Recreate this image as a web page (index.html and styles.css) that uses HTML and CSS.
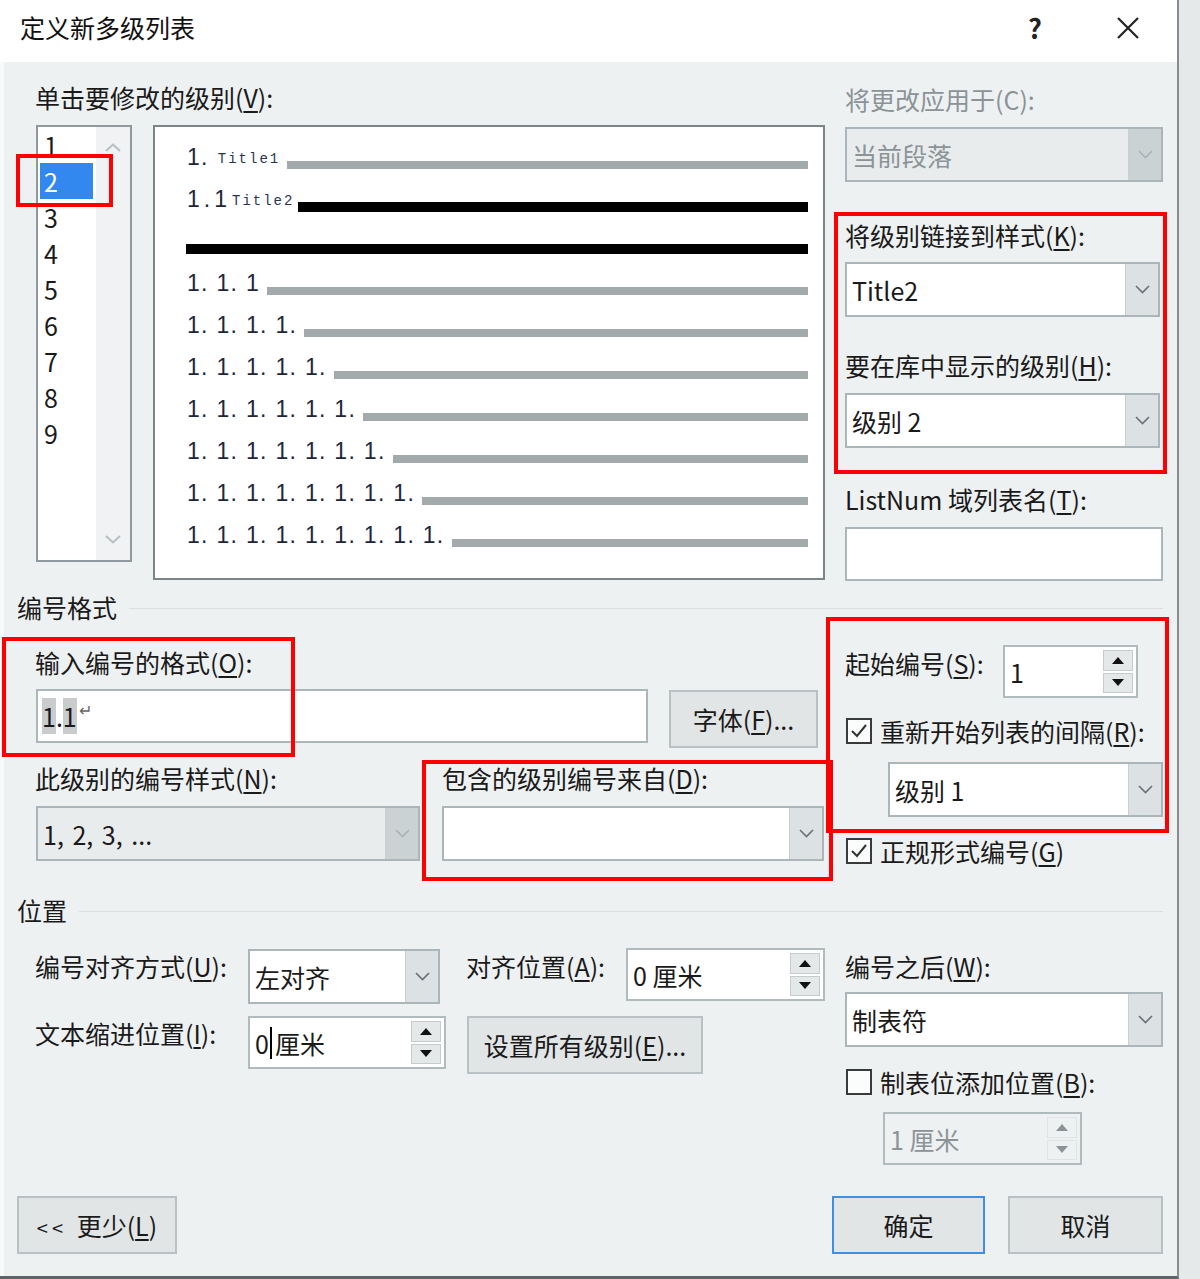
FILE: index.html
```html
<!DOCTYPE html>
<html lang="zh-CN">
<head>
    <meta charset="UTF-8">
    <meta name="viewport" content="width=device-width, initial-scale=1.0">
    <title>定义新多级列表</title>
    <link rel="stylesheet" href="styles.css">
</head>
<body>
<div class="dialog">
    <div class="titlebar">
        <span class="title">定义新多级列表</span>
        <span class="help">?</span>
        <svg class="close" width="24" height="24" viewBox="0 0 24 24"><path d="M2 2L22 22M22 2L2 22" stroke="#222" stroke-width="2.2" fill="none"/></svg>
    </div>

    <div class="content">
        <div class="top">
            <div class="levels-area">
                <div class="label">单击要修改的级别(<u>V</u>):</div>
                <div class="levels-row">
                    <div class="level-list">
                        <div class="level-items">
                            <div class="level">1</div>
                            <div class="level selected">2</div>
                            <div class="level">3</div>
                            <div class="level">4</div>
                            <div class="level">5</div>
                            <div class="level">6</div>
                            <div class="level">7</div>
                            <div class="level">8</div>
                            <div class="level">9</div>
                        </div>
                        <div class="level-scroll">
                            <svg width="16" height="9" viewBox="0 0 16 9"><polyline points="1,8 8,1.5 15,8" fill="none" stroke="#b7bfc2" stroke-width="2"/></svg>
                            <svg width="16" height="9" viewBox="0 0 16 9"><polyline points="1,1 8,7.5 15,1" fill="none" stroke="#b7bfc2" stroke-width="2"/></svg>
                        </div>
                    </div>
                    <div class="preview">
                        <div class="pv-row"><span class="pv-num">1.</span><span class="pv-title t1">Title1</span><span class="bar"></span></div>
                        <div class="pv-row"><span class="pv-num tight">1.1</span><span class="pv-title">Title2</span><span class="bar black"></span></div>
                        <div class="pv-row"><span class="bar black full"></span></div>
                        <div class="pv-row"><span class="pv-num">1. 1. 1</span><span class="bar"></span></div>
                        <div class="pv-row"><span class="pv-num">1. 1. 1. 1.</span><span class="bar"></span></div>
                        <div class="pv-row"><span class="pv-num">1. 1. 1. 1. 1.</span><span class="bar"></span></div>
                        <div class="pv-row"><span class="pv-num">1. 1. 1. 1. 1. 1.</span><span class="bar"></span></div>
                        <div class="pv-row"><span class="pv-num">1. 1. 1. 1. 1. 1. 1.</span><span class="bar"></span></div>
                        <div class="pv-row"><span class="pv-num">1. 1. 1. 1. 1. 1. 1. 1.</span><span class="bar"></span></div>
                        <div class="pv-row"><span class="pv-num">1. 1. 1. 1. 1. 1. 1. 1. 1.</span><span class="bar"></span></div>
                    </div>
                </div>
            </div>

            <div class="side">
                <div class="label muted">将更改应用于(C):</div>
                <div class="combo disabled apply-combo">
                    <span class="combo-text">当前段落</span>
                    <span class="combo-btn"><svg width="15" height="9" viewBox="0 0 15 9"><polyline points="1,1 7.5,7.5 14,1" fill="none" stroke="#aab2b5" stroke-width="1.6"/></svg></span>
                </div>
                <div class="label link-label">将级别链接到样式(<u>K</u>):</div>
                <div class="combo link-combo">
                    <span class="combo-text">Title2</span>
                    <span class="combo-btn"><svg width="15" height="9" viewBox="0 0 15 9"><polyline points="1,1 7.5,7.5 14,1" fill="none" stroke="#687175" stroke-width="1.6"/></svg></span>
                </div>
                <div class="label gallery-label">要在库中显示的级别(<u>H</u>):</div>
                <div class="combo gallery-combo">
                    <span class="combo-text">级别 2</span>
                    <span class="combo-btn"><svg width="15" height="9" viewBox="0 0 15 9"><polyline points="1,1 7.5,7.5 14,1" fill="none" stroke="#687175" stroke-width="1.6"/></svg></span>
                </div>
                <div class="label listnum-label">ListNum 域列表名(<u>T</u>):</div>
                <div class="text-input listnum-input"></div>
            </div>
        </div>

        <div class="group-title format-title"><span>编号格式</span><span class="group-line"></span></div>

        <div class="format">
            <div class="format-left">
                <div class="label enter-label">输入编号的格式(<u>O</u>):</div>
                <div class="format-row">
                    <div class="text-input format-input"><span class="hl">1</span>.<span class="hl">1</span><span class="para">↵</span></div>
                    <button class="btn font-btn">字体(<u>F</u>)...</button>
                </div>
                <div class="label-row">
                    <div class="label style-label">此级别的编号样式(<u>N</u>):</div>
                    <div class="label">包含的级别编号来自(<u>D</u>):</div>
                </div>
                <div class="combo-row">
                    <div class="combo disabled style-combo">
                        <span class="combo-text dark">1, 2, 3, ...</span>
                        <span class="combo-btn"><svg width="15" height="9" viewBox="0 0 15 9"><polyline points="1,1 7.5,7.5 14,1" fill="none" stroke="#aab2b5" stroke-width="1.6"/></svg></span>
                    </div>
                    <div class="combo include-combo">
                        <span class="combo-text"></span>
                        <span class="combo-btn"><svg width="15" height="9" viewBox="0 0 15 9"><polyline points="1,1 7.5,7.5 14,1" fill="none" stroke="#687175" stroke-width="1.6"/></svg></span>
                    </div>
                </div>
            </div>

            <div class="format-right">
                <div class="start-row">
                    <div class="label start-label">起始编号(<u>S</u>):</div>
                    <div class="spin start-spin">
                        <span class="spin-text">1</span>
                        <span class="spin-btns"><span class="spin-up"></span><span class="spin-down"></span></span>
                    </div>
                </div>
                <div class="check-row restart-check"><span class="checkbox"><svg width="20" height="20" viewBox="0 0 20 20"><polyline points="3,10 8,15 17,4" fill="none" stroke="#333" stroke-width="2"/></svg></span>重新开始列表的间隔(<u>R</u>):</div>
                <div class="combo restart-combo">
                    <span class="combo-text">级别 1</span>
                    <span class="combo-btn"><svg width="15" height="9" viewBox="0 0 15 9"><polyline points="1,1 7.5,7.5 14,1" fill="none" stroke="#687175" stroke-width="1.6"/></svg></span>
                </div>
                <div class="check-row legal-check"><span class="checkbox"><svg width="20" height="20" viewBox="0 0 20 20"><polyline points="3,10 8,15 17,4" fill="none" stroke="#333" stroke-width="2"/></svg></span>正规形式编号(<u>G</u>)</div>
            </div>
        </div>

        <div class="group-title position-title"><span>位置</span><span class="group-line"></span></div>

        <div class="position">
            <div class="position-left">
                <div class="pos-row">
                    <div class="label pos-label">编号对齐方式(<u>U</u>):</div>
                    <div class="combo align-combo">
                        <span class="combo-text">左对齐</span>
                        <span class="combo-btn"><svg width="15" height="9" viewBox="0 0 15 9"><polyline points="1,1 7.5,7.5 14,1" fill="none" stroke="#687175" stroke-width="1.6"/></svg></span>
                    </div>
                    <div class="label at-label">对齐位置(<u>A</u>):</div>
                    <div class="spin at-spin">
                        <span class="spin-text">0 厘米</span>
                        <span class="spin-btns"><span class="spin-up"></span><span class="spin-down"></span></span>
                    </div>
                </div>
                <div class="pos-row indent-row">
                    <div class="label pos-label indent-label">文本缩进位置(<u>I</u>):</div>
                    <div class="spin indent-spin">
                        <span class="spin-text">0<span class="caret"></span>厘米</span>
                        <span class="spin-btns"><span class="spin-up"></span><span class="spin-down"></span></span>
                    </div>
                    <button class="btn all-btn">设置所有级别(<u>E</u>)...</button>
                </div>
            </div>

            <div class="position-right">
                <div class="label after-label">编号之后(<u>W</u>):</div>
                <div class="combo after-combo">
                    <span class="combo-text">制表符</span>
                    <span class="combo-btn"><svg width="15" height="9" viewBox="0 0 15 9"><polyline points="1,1 7.5,7.5 14,1" fill="none" stroke="#687175" stroke-width="1.6"/></svg></span>
                </div>
                <div class="check-row tab-check"><span class="checkbox"></span>制表位添加位置(<u>B</u>):</div>
                <div class="spin disabled tab-spin">
                    <span class="spin-text">1 厘米</span>
                    <span class="spin-btns"><span class="spin-up"></span><span class="spin-down"></span></span>
                </div>
            </div>
        </div>

        <div class="footer">
            <button class="btn less-btn"><span class="chev">&lt;&lt;</span> 更少(<u>L</u>)</button>
            <div class="footer-right">
                <button class="btn ok-btn">确定</button>
                <button class="btn cancel-btn">取消</button>
            </div>
        </div>
    </div>

    <div class="mark mark-level"></div>
    <div class="mark mark-link"></div>
    <div class="mark mark-format"></div>
    <div class="mark mark-include"></div>
    <div class="mark mark-start"></div>
</div>
</body>
</html>
```

FILE: styles.css
```css
* {
    box-sizing: border-box;
}
html, body {
    margin: 0;
    padding: 0;
}
body {
    width: 1200px;
    height: 1279px;
    overflow: hidden;
    background-color: #e6e9ea;
    font-family: "Noto Sans CJK SC", "Noto Sans", sans-serif;
    font-size: 25px;
    color: #1a1a1a;
}
u {
    text-underline-offset: 3px;
    text-decoration-thickness: 1.5px;
}
.dialog {
    position: relative;
    width: 1179px;
    height: 1279px;
    background-color: #eef1f2;
    border-right: 2px solid #868c8f;
    border-bottom: 3px solid #5d6366;
}
.titlebar {
    height: 62px;
    background-color: #fff;
    display: flex;
    align-items: center;
    padding-left: 20px;
}
.title {
    flex: 1;
    line-height: 32px;
    color: #111;
    margin-top: -8px;
}
.help {
    width: 20px;
    text-align: center;
    font-size: 27px;
    font-weight: bold;
    color: #222;
    margin-right: 71px;
    margin-top: -8px;
}
.close {
    margin-right: 37px;
    margin-top: -6px;
}
.content {
    padding: 0 14px 0 13px;
    border-left: 4px solid #f8f9f9;
    height: 1214px;
}
.label {
    line-height: 30px;
    padding-bottom: 2px;
    white-space: nowrap;
    flex-shrink: 0;
}
.muted {
    color: #8b9397;
}

/* top part */
.top {
    display: flex;
    padding: 20px 0 0 18px;
}
.levels-area {
    width: 790px;
}
.levels-row {
    display: flex;
    margin-top: 11px;
}
.level-list {
    width: 96px;
    height: 437px;
    margin-left: 1px;
    border: 2px solid #8f9a9e;
    background-color: #fff;
    display: flex;
}
.level-items {
    width: 58px;
    padding-top: 0;
}
.level {
    width: 53px;
    height: 36px;
    line-height: 36px;
    margin-left: 2px;
    padding-left: 4px;
}
.level.selected {
    background-color: #3388ef;
    color: #fff;
}
.level-scroll {
    width: 34px;
    background-color: #f0f2f3;
    display: flex;
    flex-direction: column;
    justify-content: space-between;
    align-items: center;
    padding: 16px 0 16px;
}
.preview {
    margin-left: 21px;
    width: 672px;
    height: 455px;
    border: 2px solid #7b8487;
    background-color: #fff;
    padding: 9px 15px 0 32px;
}
.pv-row {
    height: 42px;
    display: flex;
    align-items: center;
}
.pv-num {
    font-family: "Liberation Sans", Arial, sans-serif;
    font-size: 23px;
    letter-spacing: 1.3px;
    white-space: pre;
    color: #20263a;
}
.pv-num.tight {
    letter-spacing: 4px;
}
.pv-title {
    font-family: "Liberation Mono", monospace;
    font-size: 14px;
    letter-spacing: 2px;
    color: #2a3552;
    margin-top: 4px;
    margin-left: 1px;
}
.pv-title.t1 {
    margin-left: 9px;
}
.bar {
    flex: 1;
    height: 8px;
    margin-left: 7px;
    margin-top: 15px;
    background-color: #a2aaab;
}
.bar.black {
    height: 10px;
    margin-top: 16px;
    margin-left: 4px;
    background-color: #000;
}
.bar.full {
    margin-left: -1px;
}

.side {
    width: 318px;
    margin-left: 20px;
    padding-top: 2px;
}
.apply-combo {
    margin-top: 11px;
}
.link-label {
    margin-top: 38px;
}
.link-combo {
    margin-top: 10px;
    margin-right: 3px;
}
.gallery-label {
    margin-top: 33px;
}
.gallery-combo {
    margin-top: 11px;
    margin-right: 3px;
}
.listnum-label {
    margin-top: 36px;
}
.listnum-input {
    margin-top: 11px;
    height: 53px;
}

/* controls */
.combo {
    display: flex;
    height: 55px;
    border: 2px solid #abb6ba;
    background-color: #fff;
}
.combo-text {
    flex: 1;
    align-self: center;
    padding-left: 5px;
    white-space: nowrap;
}
.combo-btn {
    width: 33px;
    background-color: #dce2e3;
    border-left: 1px solid #c9d0d2;
    display: flex;
    align-items: center;
    justify-content: center;
}
.combo.disabled {
    background-color: #e8ecec;
    color: #8b9397;
}
.combo.disabled .combo-btn {
    background-color: #cbd2d4;
}
.combo-text.dark {
    color: #1a1a1a;
    word-spacing: 3px;
}
.text-input {
    height: 54px;
    border: 2px solid #abb6ba;
    background-color: #fff;
}
.spin {
    display: flex;
    height: 53px;
    border: 2px solid #b1bbbe;
    background-color: #fff;
}
.spin-text {
    flex: 1;
    align-self: center;
    padding-left: 5px;
    white-space: nowrap;
    display: flex;
    align-items: center;
}
.spin-btns {
    width: 33px;
    display: flex;
    flex-direction: column;
    gap: 2px;
    padding: 3px 3px 3px 0;
}
.spin-up, .spin-down {
    flex: 1;
    background-color: #e4e8e9;
    border: 1px solid #c5ccce;
    display: flex;
    align-items: center;
    justify-content: center;
}
.spin-up::before {
    content: "";
    border-left: 6px solid transparent;
    border-right: 6px solid transparent;
    border-bottom: 7px solid #111;
}
.spin-down::before {
    content: "";
    border-left: 6px solid transparent;
    border-right: 6px solid transparent;
    border-top: 7px solid #111;
}
.spin.disabled {
    background-color: #eef1f2;
    color: #8b9397;
}
.spin.disabled .spin-up, .spin.disabled .spin-down {
    background-color: #eef1f2;
    border-color: #e0e4e5;
}
.spin.disabled .spin-up::before {
    border-bottom-color: #8b9397;
}
.spin.disabled .spin-down::before {
    border-top-color: #8b9397;
}
.caret {
    display: inline-block;
    width: 2px;
    height: 32px;
    background-color: #000;
    margin: 0 3px 0 1px;
}
.btn {
    height: 58px;
    padding: 0;
    background-color: #e1e5e6;
    border: 2px solid #b9c1c4;
    font-family: inherit;
    font-size: 25px;
    color: #1a1a1a;
    flex-shrink: 0;
}
.check-row {
    display: flex;
    align-items: center;
    height: 32px;
    white-space: nowrap;
}
.checkbox {
    width: 26px;
    height: 26px;
    margin: 0 8px 0 1px;
    border: 2px solid #3a3a3a;
    background-color: #fbfcfc;
    display: flex;
    align-items: center;
    justify-content: center;
}

/* group titles */
.group-title {
    display: flex;
    align-items: center;
    line-height: 30px;
    padding-bottom: 2px;
}
.group-line {
    flex: 1;
    height: 1px;
    margin-left: 12px;
    margin-top: 2px;
    background-color: #d9dee0;
}
.format-title {
    margin-top: 11px;
}
.position-title {
    margin-top: 28px;
}

/* number format */
.format {
    display: flex;
    padding-left: 18px;
}
.format-left {
    width: 790px;
}
.enter-label {
    margin-top: 23px;
}
.format-row {
    display: flex;
    margin-top: 10px;
}
.format-input {
    width: 612px;
    margin-left: 1px;
    display: flex;
    align-items: center;
    padding-left: 4px;
}
.hl {
    background-color: #c8cccd;
    line-height: 36px;
}
.para {
    font-size: 16px;
    color: #666;
    margin-left: 2px;
    margin-top: -14px;
}
.font-btn {
    width: 149px;
    margin-left: 21px;
    margin-top: 1px;
}
.label-row {
    display: flex;
    margin-top: 15px;
}
.style-label {
    width: 407px;
}
.combo-row {
    display: flex;
    margin-top: 11px;
}
.style-combo {
    width: 384px;
    margin-left: 1px;
}
.include-combo {
    width: 382px;
    margin-left: 22px;
}
.format-right {
    width: 318px;
    margin-left: 20px;
}
.start-row {
    display: flex;
    margin-top: 21px;
}
.start-label {
    width: 158px;
    margin-top: 3px;
}
.start-spin {
    width: 135px;
}
.restart-check {
    margin-top: 17px;
}
.restart-combo {
    width: 275px;
    margin-top: 15px;
    margin-left: 43px;
}
.legal-check {
    margin-top: 18px;
}

/* position */
.position {
    display: flex;
    padding-left: 18px;
}
.position-left {
    width: 790px;
}
.pos-row {
    display: flex;
    align-items: flex-start;
    margin-top: 21px;
}
.pos-row.indent-row {
    margin-top: 12px;
}
.pos-label {
    width: 213px;
    margin-top: 3px;
}
.indent-label {
    margin-top: 2px;
}
.align-combo {
    width: 192px;
    margin-top: 1px;
}
.at-label {
    width: 160px;
    margin-left: 26px;
    margin-top: 3px;
}
.at-spin {
    width: 199px;
}
.indent-spin {
    width: 198px;
}
.all-btn {
    width: 236px;
    margin-left: 21px;
}
.position-right {
    width: 318px;
    margin-left: 20px;
}
.after-label {
    margin-top: 24px;
}
.after-combo {
    margin-top: 9px;
}
.tab-check {
    margin-top: 19px;
}
.tab-spin {
    width: 199px;
    margin-top: 14px;
    margin-left: 38px;
}

/* footer */
.footer {
    display: flex;
    justify-content: space-between;
    margin-top: 31px;
}
.less-btn {
    width: 160px;
}
.chev {
    font-size: 20px;
    letter-spacing: 4px;
    margin-right: 4px;
}
.footer-right {
    display: flex;
    gap: 23px;
}
.ok-btn {
    width: 153px;
    border: 2px solid #3d8fe8;
}
.cancel-btn {
    width: 155px;
}

/* annotation boxes */
.mark {
    position: absolute;
    border: 4px solid #ff0000;
    pointer-events: none;
}
.mark-level {
    left: 16px;
    top: 154px;
    width: 97px;
    height: 53px;
}
.mark-link {
    left: 834px;
    top: 212px;
    width: 333px;
    height: 262px;
}
.mark-format {
    left: 2px;
    top: 637px;
    width: 293px;
    height: 120px;
}
.mark-include {
    left: 422px;
    top: 760px;
    width: 411px;
    height: 121px;
}
.mark-start {
    left: 826px;
    top: 617px;
    width: 343px;
    height: 216px;
}
```
